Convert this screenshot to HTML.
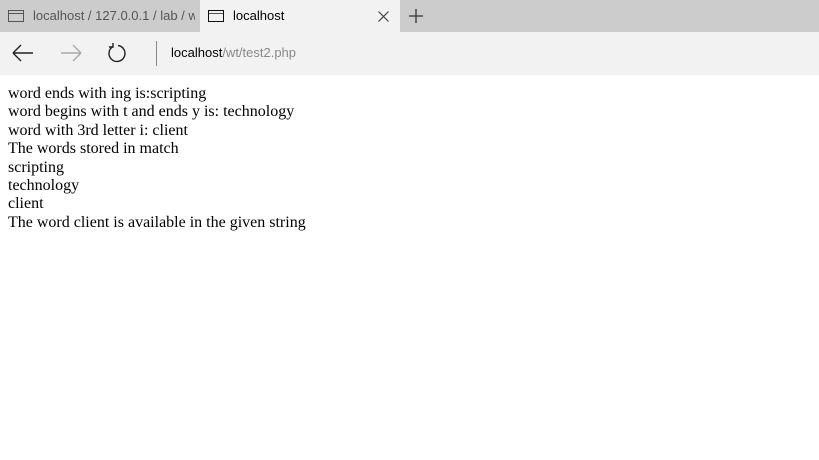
<!DOCTYPE html>
<html><head><style>
body{margin:0;width:819px;height:460px;background:#fff;overflow:hidden;font-family:"Liberation Sans",sans-serif;}
.tabs{position:absolute;top:0;left:0;width:819px;height:32px;background:#cccccc;}
.tab{position:absolute;top:0;height:32px;font-size:13px;color:#555;line-height:32px;}
.t1{left:0;width:200px;}
.t2{left:200px;width:200px;background:#f2f2f2;color:#000;}
.ico{position:absolute;top:10px;width:16px;height:12px;border:1px solid #555;box-sizing:border-box;}
.ico:after{content:"";position:absolute;left:0;right:0;top:2px;height:1px;background:#555;}
.bar{position:absolute;top:32px;left:0;width:819px;height:43px;background:#f2f2f2;}
.content{position:absolute;top:85px;left:8px;font-family:"Liberation Serif",serif;font-size:16px;line-height:18.4px;color:#000;}
</style></head><body>
<div class="tabs">
 <div class="tab t1"><div class="ico" style="left:8px"></div><span style="position:absolute;left:33px;white-space:nowrap;overflow:hidden;width:162px">localhost / 127.0.0.1 / lab / w</span></div>
 <div class="tab t2"><div class="ico" style="left:8px;border-color:#111"></div><span style="position:absolute;left:33px">localhost</span>
 <svg style="position:absolute;left:178px;top:11px" width="11" height="11"><path d="M0.5 0.5L10.5 10.5M10.5 0.5L0.5 10.5" stroke="#444" stroke-width="1.2"/></svg></div>
 <svg style="position:absolute;left:409px;top:9px" width="14" height="14"><path d="M7 0V14M0 7H14" stroke="#333" stroke-width="1.3"/></svg>
</div>
<div class="bar">
 <svg style="position:absolute;left:12px;top:12px" width="22" height="18"><path d="M1 9H21M1 9L9 1M1 9L9 17" stroke="#222" stroke-width="1.4" fill="none"/></svg>
 <svg style="position:absolute;left:60px;top:12px" width="22" height="18"><path d="M1 9H21M21 9L13 1M21 9L13 17" stroke="#aaa" stroke-width="1.4" fill="none"/></svg>
 <svg style="position:absolute;left:107px;top:11px" width="22" height="22"><path d="M6 3.5A8 8 0 1 0 11 2.5" stroke="#222" stroke-width="1.4" fill="none"/><path d="M6 0V4H2" stroke="#222" stroke-width="1.4" fill="none"/></svg>
 <div style="position:absolute;left:156px;top:9px;width:1px;height:25px;background:#888"></div>
 <div style="position:absolute;left:171px;top:13px;font-size:13px;color:#000">localhost<span style="color:#888">/wt/test2.php</span></div>
</div>
<div class="content">
word ends with ing is:scripting<br>
word begins with t and ends y is: technology<br>
word with 3rd letter i: client<br>
The words stored in match<br>
scripting<br>
technology<br>
client<br>
The word client is available in the given string
</div>
</body></html>
